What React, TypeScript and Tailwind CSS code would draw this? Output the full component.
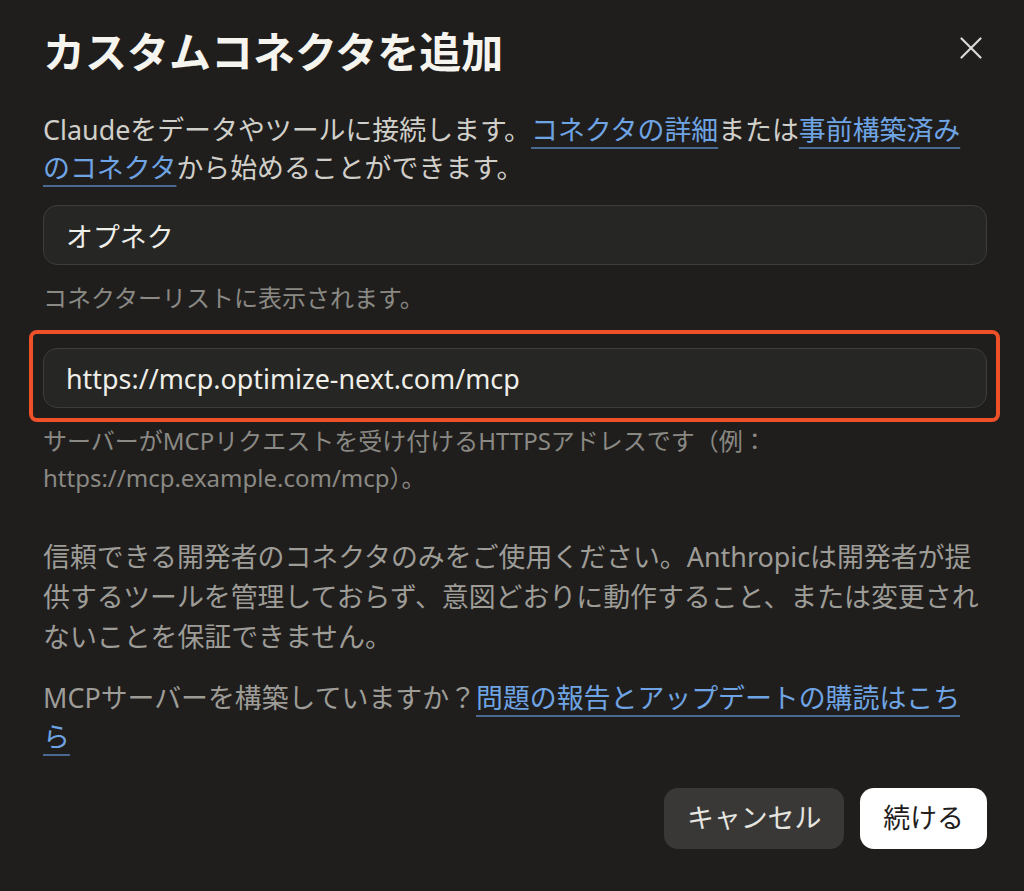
import { useState } from "react";

const FONT = `"Noto Sans", "Noto Sans CJK JP", sans-serif`;

function CloseIcon() {
  return (
    <svg width="22" height="22" viewBox="0 0 22 22" fill="none" stroke="currentColor" strokeWidth="2.2" strokeLinecap="round">
      <line x1="1.5" y1="1.5" x2="20.5" y2="20.5" />
      <line x1="20.5" y1="1.5" x2="1.5" y2="20.5" />
    </svg>
  );
}

function Link({ children }: { children: React.ReactNode }) {
  return (
    <a
      href="#"
      className="text-[#6fa4e4] underline decoration-[#4a6890] decoration-2 underline-offset-[7px]"
    >
      {children}
    </a>
  );
}

export default function App() {
  const [name, setName] = useState("オプネク");
  const [url, setUrl] = useState("https://mcp.optimize-next.com/mcp");

  return (
    <div className="min-h-screen bg-[#1f1e1d] pl-[43px] pr-[37px] pt-[27px]" style={{ fontFamily: FONT }}>
      {/* Header */}
      <div className="flex h-[50px] items-center justify-between">
        <h1 className="text-[42px] font-bold leading-[50px] text-[#f5f4ef]">カスタムコネクタを追加</h1>
        <button className="mr-[5px] mb-[8px] text-[#dcdbd6]">
          <CloseIcon />
        </button>
      </div>

      <p className="mt-[34px] text-[26.9px] leading-[38px] text-[#d1cfc9]">
        Claudeをデータやツールに接続します。<Link>コネクタの詳細</Link>または<Link>事前構築済みのコネクタ</Link>から始めることができます。
      </p>

      <input
        className="mt-[18px] block h-[60px] w-full rounded-[14px] border border-[#3d3c3a] bg-[#262624] px-[22px] text-[26.9px] text-[#efeee9] outline-none"
        value={name}
        onChange={(e) => setName(e.target.value)}
      />
      <p className="mt-[15px] text-[24px] leading-[36px] text-[#8a8984]">コネクターリストに表示されます。</p>

      {/* URL field, with the red annotation frame on top */}
      <div className="relative mt-[32px]">
        <input
          className="block h-[60px] w-full rounded-[14px] border border-[#3d3c3a] bg-[#262624] px-[22px] text-[26.9px] text-[#efeee9] outline-none"
          value={url}
          onChange={(e) => setUrl(e.target.value)}
        />
        <div className="pointer-events-none absolute -top-[18px] -bottom-[14px] -left-[14px] -right-[13px] rounded-[8px] border-[4px] border-[#ee5028]" />
      </div>
      <p className="mt-[14px] text-[24px] leading-[37px] text-[#8a8984]">
        サーバーがMCPリクエストを受け付けるHTTPSアドレスです（例：https://mcp.example.com/mcp）。
      </p>

      <p className="mt-[41px] text-[26.9px] leading-[40px] text-[#9d9c97]">
        信頼できる開発者のコネクタのみをご使用ください。Anthropicは開発者が提供するツールを管理しておらず、意図どおりに動作すること、または変更されないことを保証できません。
      </p>

      <p className="mt-[21px] pr-[8px] text-[26.9px] leading-[39px] text-[#9d9c97]">
        MCPサーバーを構築していますか？<Link>問題の報告とアップデートの購読はこちら</Link>
      </p>

      <div className="mt-[32px] flex justify-end gap-[16px]">
        <button className="h-[61px] rounded-[14px] bg-[#393836] px-[23px] text-[26.9px] text-[#e6e5e0]">キャンセル</button>
        <button className="h-[61px] rounded-[14px] bg-white px-[23px] text-[26.9px] text-[#1f1e1d]">続ける</button>
      </div>
    </div>
  );
}
